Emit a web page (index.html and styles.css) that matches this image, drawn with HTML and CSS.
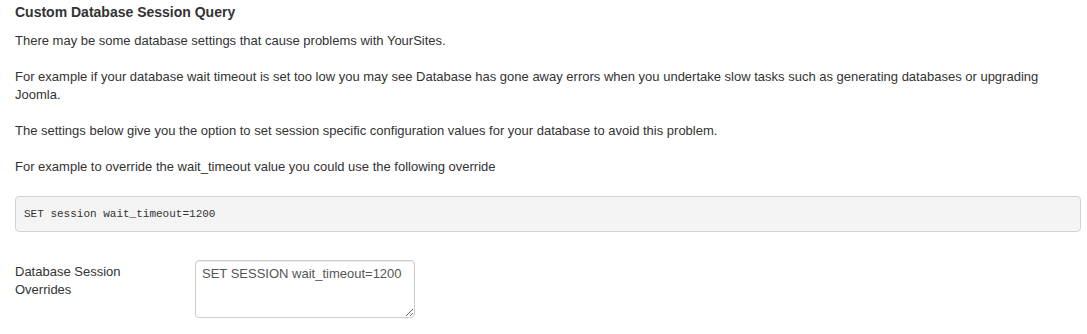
FILE: index.html
```html
<!DOCTYPE html>
<html lang="en">
<head>
  <meta charset="UTF-8">
  <title>Custom Database Session Query</title>
  <link rel="stylesheet" href="styles.css">
</head>
<body>

  <div class="panel">
    <h3 class="panel-title">Custom Database Session Query</h3>

    <p>There may be some database settings that cause problems with YourSites.</p>
    <p>For example if your database wait timeout is set too low you may see Database has gone away errors when you undertake slow tasks such as generating databases or upgrading Joomla.</p>
    <p>The settings below give you the option to set session specific configuration values for your database to avoid this problem.</p>
    <p>For example to override the wait_timeout value you could use the following override</p>

    <pre class="code">SET session wait_timeout=1200</pre>

    <!-- Form -->
    <div class="control-group">
      <label class="control-label" for="sessionOverrides">Database Session Overrides</label>
      <div class="controls">
        <textarea id="sessionOverrides" class="input">SET SESSION wait_timeout=1200</textarea>
      </div>
    </div>
  </div>

</body>
</html>
```

FILE: styles.css
```css
body {
  font-family: "Liberation Sans", Arial, sans-serif;
  font-size: 13px;
  line-height: 18px;
  color: #333;
  margin: 0;
  padding: 0;
  background: #fff;
}

.panel {
  padding: 2px 6px 0 15px;
}

.panel-title {
  font-size: 14px;
  font-weight: bold;
  line-height: 20px;
  margin: 0 0 10px;
}

p {
  margin: 0 0 18px;
}

.code {
  margin: 20px 0 28px;
  padding: 8px;
  background: #f4f4f4;
  border: 1px solid #d3d3d3;
  border-radius: 4px;
  font-family: "Liberation Mono", "Courier New", monospace;
  font-size: 11px;
  line-height: 18px;
  color: #333;
}

.control-group {
  display: flex;
}

.control-label {
  width: 140px;
  flex: none;
  padding-top: 3px;
  margin-right: 40px;
}

.input {
  width: 206px;
  height: 48px;
  padding: 4px 6px;
  margin: 0;
  border: 1px solid #ccc;
  border-radius: 4px;
  font-family: "Liberation Sans", Arial, sans-serif;
  font-size: 13px;
  line-height: 18px;
  color: #555;
  box-shadow: inset 0 1px 1px rgba(0, 0, 0, 0.075);
}
```
